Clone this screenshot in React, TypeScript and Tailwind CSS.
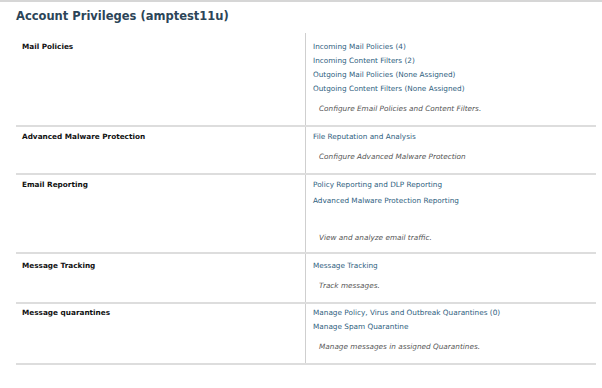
import React from "react";

type Row = { label: string; links: string[]; desc: string; pt: string; pb: string; gap?: boolean };

const rows: Row[] = [
  {
    label: "Mail Policies",
    links: [
      "Incoming Mail Policies (4)",
      "Incoming Content Filters (2)",
      "Outgoing Mail Policies (None Assigned)",
      "Outgoing Content Filters (None Assigned)",
    ],
    desc: "Configure Email Policies and Content Filters.",
    pt: "pt-[7px]",
    pb: "pb-[9px]",
  },
  {
    label: "Advanced Malware Protection",
    links: ["File Reputation and Analysis"],
    desc: "Configure Advanced Malware Protection",
    pt: "pt-[3px]",
    pb: "pb-[9px]",
  },
  {
    label: "Email Reporting",
    links: ["Policy Reporting and DLP Reporting", "Advanced Malware Protection Reporting"],
    desc: "View and analyze email traffic.",
    pt: "pt-[3px]",
    pb: "pb-[7px]",
    gap: true,
  },
  {
    label: "Message Tracking",
    links: ["Message Tracking"],
    desc: "Track messages.",
    pt: "pt-[5px]",
    pb: "pb-[9px]",
  },
  {
    label: "Message quarantines",
    links: ["Manage Policy, Virus and Outbreak Quarantines (0)", "Manage Spam Quarantine"],
    desc: "Manage messages in assigned Quarantines.",
    pt: "pt-[2px]",
    pb: "pb-[9px]",
  },
];

export default function App() {
  return (
    <div
      className="w-[602px] h-[388px] bg-white border-t-2 border-[#d6d6d6] overflow-hidden"
      style={{ fontFamily: '"DejaVu Sans", Verdana, sans-serif' }}
    >
      <div className="pl-[16px] pt-[7px] h-[31px] text-[11.5px] leading-[14px] font-bold text-[#2c4558]">
        Account Privileges (amptest11u)
      </div>
      <div className="ml-[16px] w-[580px]">
        {rows.map((r, i) => (
          <div key={i} className="grid grid-cols-[289px_1fr] border-b-2 border-[#dddddd]">
            <div className={`${r.pt} pl-[6px] text-[7.3px] leading-[14px] font-bold text-[#111]`}>
              {r.label}
            </div>
            <div className={`${r.pt} ${r.pb} pl-[7px] border-l border-[#cfcfcf] text-[7.3px] leading-[14px]`}>
              <div className={`flex flex-col ${r.gap ? "gap-[2px]" : ""}`}>
                {r.links.map((l, j) => (
                  <div key={j} className="text-[#2f6180]">
                    {l}
                  </div>
                ))}
              </div>
              {r.gap && <div className="h-[17px]" />}
              <div className="mt-[6px] pl-[6px] italic text-[#555]">{r.desc}</div>
            </div>
          </div>
        ))}
      </div>
    </div>
  );
}
